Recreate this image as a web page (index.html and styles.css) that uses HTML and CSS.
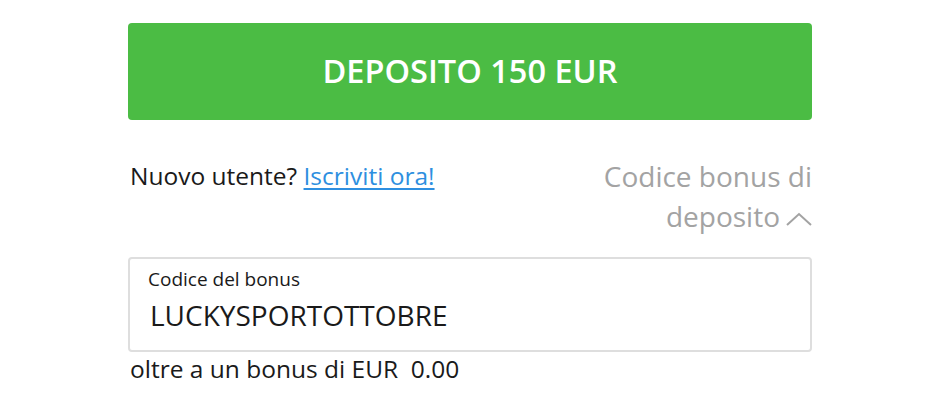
FILE: index.html
```html
<!DOCTYPE html>
<html lang="it">
<head>
<meta charset="utf-8">
<link rel="stylesheet" href="styles.css">
</head>
<body>
<main class="panel">
  <button class="deposit">DEPOSITO 150 EUR</button>
  <div class="row">
    <p class="newuser">Nuovo utente? <a href="#">Iscriviti ora!</a></p>
    <p class="bonus-toggle">Codice bonus di deposito<svg class="chev" width="26" height="16" viewBox="0 0 26 16"><path d="M1 14 L13 3 L25 14" fill="none" stroke="#a3a3a3" stroke-width="2"/></svg></p>
  </div>
  <div class="field">
    <span class="label">Codice del bonus</span>
    <span class="value">LUCKYSPORTOTTOBRE</span>
  </div>
  <p class="extra">oltre a un bonus di EUR&nbsp; 0.00</p>
</main>
</body>
</html>
```
FILE: styles.css
```css
* { box-sizing: border-box; }
html, body { margin: 0; padding: 0; background: #fff; }
body { font-family: "Open Sans", "Noto Sans", sans-serif; color: #1a1a1a; }
.panel { width: 684px; margin: 0 0 0 128px; padding-top: 23px; display: flex; flex-direction: column; }
.deposit {
  height: 97px; border: 0; border-radius: 4px; background: #4bbc44; color: #fff;
  font-family: inherit; font-size: 32.5px; font-weight: 600; letter-spacing: 0;
  display: flex; align-items: center; justify-content: center; padding: 0 0 2px;
}
.row { display: flex; justify-content: space-between; align-items: flex-start; margin-top: 36px; }
.newuser { margin: 0; font-size: 24.5px; line-height: 40px; padding-left: 2px; }
.newuser a { color: #2e8fe0; text-decoration: underline; text-underline-offset: 3px; }
.bonus-toggle { margin: 0; width: 240px; text-align: right; font-size: 28px; line-height: 40px; color: #a3a3a3; }
.chev { margin-left: 6px; vertical-align: 0; }
.field {
  margin-top: 21px; height: 95px; border: 2px solid #dedede; border-radius: 4px;
  padding: 7px 18px 0; display: flex; flex-direction: column;
}
.label { font-size: 19px; line-height: 26px; color: #1a1a1a; }
.value { font-size: 28px; line-height: 38px; padding-left: 2px; margin-top: 4px; color: #1a1a1a; }
.extra { margin: 1px 0 0 2px; font-size: 24.5px; line-height: 32px; }
```
